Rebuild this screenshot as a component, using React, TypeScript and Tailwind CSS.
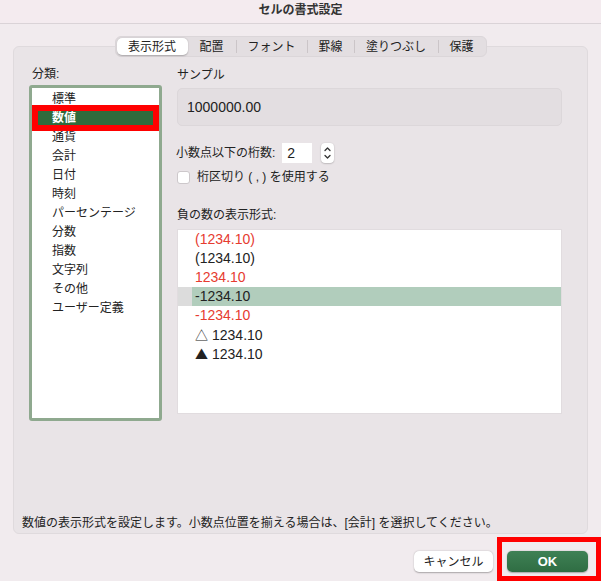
const categories = ['標準', '数値', '通貨', '会計', '日付', '時刻', 'パーセンテージ', '分数', '指数', '文字列', 'その他', 'ユーザー定義'];

const negatives = [
  { label: '(1234.10)', red: true },
  { label: '(1234.10)', red: false },
  { label: '1234.10', red: true },
  { label: '-1234.10', red: false, selected: true },
  { label: '-1234.10', red: true },
  { label: '1234.10', red: false, mark: '△' },
  { label: '1234.10', red: false, mark: '▲' },
];

function Tabs() {
  const sep = <div className="w-px h-[13px] bg-[#cbc5c8]" />;
  return (
    <div className="relative z-10 mt-[12px] flex justify-center">
      <div className="flex items-center h-[21px] p-px rounded-[6px] bg-[#e3dee1] border border-[#dbd6d9] text-[12px] leading-none text-[#222]">
        <div className="w-[71px] h-full flex items-center justify-center rounded-[5px] bg-white shadow-[0_0.5px_1.5px_rgba(0,0,0,0.25)]">表示形式</div>
        <div className="w-[48px] text-center">配置</div>
        {sep}
        <div className="w-[70px] text-center">フォント</div>
        {sep}
        <div className="w-[46px] text-center">罫線</div>
        {sep}
        <div className="w-[83px] text-center">塗りつぶし</div>
        {sep}
        <div className="w-[46px] text-center">保護</div>
      </div>
    </div>
  );
}

function Stepper() {
  return (
    <div className="ml-[9px] w-[13px] h-[20px] rounded-[4px] bg-white shadow-[0_0.5px_1.5px_rgba(0,0,0,0.3)]">
      <svg width="13" height="20" viewBox="0 0 13 20" fill="none" stroke="#333" strokeWidth="1.3" strokeLinecap="round" strokeLinejoin="round">
        <path d="M4 7.5 L6.5 5 L9 7.5" />
        <path d="M4 12.5 L6.5 15 L9 12.5" />
      </svg>
    </div>
  );
}

export default function App() {
  return (
    <div className="w-[601px] h-[581px] overflow-hidden bg-[#f1ebee] flex flex-col font-['Liberation_Sans','Noto_Sans_CJK_JP',sans-serif] text-[#222]">
      {/* title bar */}
      <div className="h-[24px] shrink-0 border-b border-[#dad3d7] bg-[#f4ebef] flex items-center justify-center pb-[4px] text-[12px] font-bold leading-none text-[#333]">
        セルの書式設定
      </div>

      <Tabs />

      {/* panel */}
      <div className="-mt-[11px] mx-[13px] h-[488px] shrink-0 rounded-[6px] border border-[#dfdadd] bg-[#e9e4e7] flex flex-col pt-[19px]">
        <div className="flex gap-[15px] pl-[15px]">
          {/* category list */}
          <div className="w-[133px] flex flex-col">
            <div className="pl-[3px] text-[12px] leading-[16px]">分類:</div>
            <div className="mt-[3px] h-[336px] pt-[2px] rounded-[3px] border-[3px] border-[#8fa98f] bg-white">
              {categories.map((c) =>
                c === '数値' ? (
                  <div key={c} className="relative h-[19px] bg-[#2f6b3c] pl-[20px] text-[12px] leading-[19px] font-bold text-white">
                    {c}
                    <div className="absolute -top-[4px] left-0 right-0 h-[26px] border-[6px] border-[#ff0000]" />
                  </div>
                ) : (
                  <div key={c} className="h-[19px] pl-[20px] text-[12px] leading-[19px]">{c}</div>
                )
              )}
            </div>
          </div>

          {/* right column */}
          <div className="w-[385px] flex flex-col pt-px">
            <div className="text-[12px] leading-[16px]">サンプル</div>
            <div className="mt-[5px] h-[38px] rounded-[5px] border border-[#dcd7da] bg-[#e3dee1] flex items-center pl-[9px] text-[14px]">
              1000000.00
            </div>

            <div className="mt-[17px] h-[20px] flex items-center">
              <span className="text-[12px] leading-none -ml-px">小数点以下の桁数:</span>
              <div className="ml-[7px] w-[30px] h-[20px] bg-white flex items-center pl-[5px] text-[14px]">2</div>
              <Stepper />
            </div>

            <div className="mt-[7px] h-[14px] flex items-center">
              <div className="w-[13px] h-[13px] rounded-[3px] border border-[#cdc8cb] bg-white" />
              <span className="ml-[7px] text-[12px] leading-none">桁区切り ( , ) を使用する</span>
            </div>

            <div className="mt-[23px] text-[12px] leading-[16px]">負の数の表示形式:</div>
            <div className="mt-[6px] h-[185px] border border-[#e1dcdf] bg-white">
              {negatives.map((n, i) =>
                n.selected ? (
                  <div key={i} className="h-[19px] flex text-[14px] leading-[19px]">
                    <div className="w-[14px] bg-[#dcdcdc]" />
                    <div className="flex-1 bg-[#b1cdbc] pl-[3px]">{n.label}</div>
                  </div>
                ) : (
                  <div key={i} className={n.red ? 'h-[19px] pl-[17px] text-[14px] leading-[19px] text-[#e63b30]' : 'h-[19px] pl-[17px] text-[14px] leading-[19px]'}>
                    {n.mark && <span className="font-['Noto_Sans_CJK_JP',sans-serif] text-[13px] mr-[4px]">{n.mark}</span>}
                    {n.label}
                  </div>
                )
              )}
            </div>
          </div>
        </div>

        <div className="mt-auto pl-[8px] pb-[2px] text-[12px] leading-[16px]">
          数値の表示形式を設定します。小数点位置を揃える場合は、[会計] を選択してください。
        </div>
      </div>

      {/* buttons */}
      <div className="mt-[3px] flex justify-end items-start gap-[4px]">
        <div className="mt-[14px] w-[79px] h-[21px] rounded-[5px] bg-white shadow-[0_0.5px_1.5px_rgba(0,0,0,0.3)] flex items-center justify-center text-[12px] leading-none">
          キャンセル
        </div>
        <div className="w-[104px] h-[44px] shrink-0 border-[5px] border-[#ff0000] pt-[9px] pl-[5px]">
          <div className="w-[81px] h-[21px] rounded-[5px] bg-gradient-to-b from-[#3f8155] to-[#2f6d43] shadow-[0_0.5px_1.5px_rgba(0,0,0,0.3)] flex items-center justify-center text-[13px] font-bold leading-none text-white">
            OK
          </div>
        </div>
      </div>
    </div>
  );
}
